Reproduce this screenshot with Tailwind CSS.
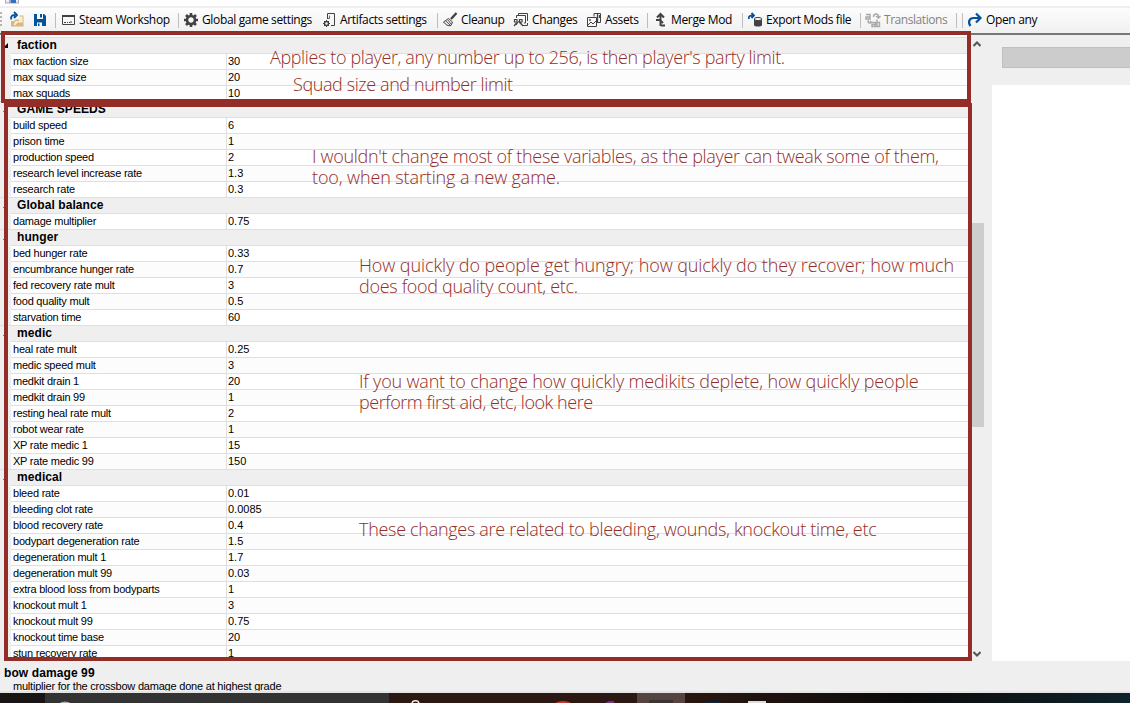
<!DOCTYPE html>
<html lang="en">
<head>
<meta charset="utf-8">
<title>Global game settings</title>
<script src="https://cdn.jsdelivr.net/npm/@tailwindcss/browser@4"></script>
</head>
<body class="relative flex h-[703px] w-[1130px] flex-col overflow-hidden bg-[#efefef] text-black">
<header class="h-[6px] shrink-0 bg-white">
  <svg class="ml-[5px] block" width="14" height="4"><path d="M0 0h14v3.500H0z" fill="#a3a9b5"/><path d="M1 0h3v2.500H1zM11 0h2v2.500h-2z" fill="#eef"/><path d="M6 0h5v3H6z" fill="#2f6fd0"/></svg>
</header>
<nav class="flex h-[29px] shrink-0 items-start border-t-2 border-b-2 border-t-[#efefef] border-b-[#777] bg-linear-to-b from-[#fdfdfd] to-[#f0f0f0] font-['Open_Sans',sans-serif] text-[12px] leading-[24px] tracking-[-0.35px] whitespace-nowrap">
  <svg class="shrink-0" width="79" height="25" viewBox="0 8 79 25">
    <path d="M0 12h2v2H0zM0 16h2v2H0zM0 20h2v2H0zM0 24h2v2H0z" fill="#b4b4b4"/>
    <path d="M55.500 13v15" stroke="#bdbdbd"/>
    <path d="M11 21v5.500h12.500V15.500H19.500v4h-4l-1.500 1.500z" fill="#dcb67a"/><path d="M19 16.500h3.500v6h-5l-2 2.500h-2l2-4h3.500z" fill="#f5eddd"/>
    <path d="M11.500 19.500c-1.500-3 .5-4.500 4-4.500M14 12l3 3-3 3" fill="none" stroke="#00539c" stroke-width="1.800"/>
    <path d="M34 14h10l2 2v10H34z" fill="#00539c"/><path d="M37 14h6v5h-6zM37 22.500h5v3.500h-5z" fill="#f9f9f9"/><path d="M40 14h2v3.500h-2zM38 23.500h1.500v2.500H38z" fill="#00539c"/>
    <g fill="none" stroke="#424242"><path d="M62.500 15.500h12v9h-12z"/><path d="M62 16h13" stroke-width="2"/><path d="M64 22.500h2M67 22.500h1M69 22.500h1M71 21v2"/></g>
  </svg>
  <span class="w-[97px]">Steam Workshop</span>
  <svg class="shrink-0" width="26" height="25" viewBox="176 8 26 25">
    <path d="M178.500 13v15" stroke="#bdbdbd"/>
    <g transform="translate(191 20)" stroke="#424242" stroke-width="2.600"><circle r="4" fill="none"/><path d="M0-7v3M0 7V4M-7 0h3M7 0H4M-5-5l2 2M5 5L3 3M-5 5l2-2M5-5L3-3"/></g>
  </svg>
  <span class="w-[116px]">Global game settings</span>
  <svg class="shrink-0" width="22" height="25" viewBox="318 8 22 25">
    <g fill="none" stroke="#424242"><path d="M327.500 19v-5.500h7v12H331"/><path d="M327 18.500h2.500v-3" stroke-width=".8"/><circle cx="326.500" cy="23.500" r="2" stroke-width="1.400"/><path d="M326.500 20v1.500M326.500 25.500V27M323 23.500h1.500M328.500 23.500h1.500M324 21l1 1M328 25l1 1M329 21l-1 1M325 25l-1 1"/></g>
  </svg>
  <span class="w-[95px]">Artifacts settings</span>
  <svg class="shrink-0" width="26" height="25" viewBox="435 8 26 25">
    <path d="M437.500 13v15" stroke="#bdbdbd"/>
    <path d="M456.500 13l-5.500 6" stroke="#424242" stroke-width="2.400"/><path d="M448.500 18.500l4 3.500-1.500 3.500c-3 .8-5-.5-7.500-3.500z" fill="#e4e4e4" stroke="#424242"/><path d="M446 21l4 4M448 20l3 4" stroke="#424242" stroke-width=".8"/>
  </svg>
  <span class="w-[49px]">Cleanup</span>
  <svg class="shrink-0" width="22" height="25" viewBox="510 8 22 25">
    <g fill="none" stroke="#424242"><path d="M518.500 16v-2.500h9v7.500M516.500 18v-2.500h9v7.500H524M527.500 23v2.500H522"/><path d="M514.500 19.500h2.500v2.500h-2.500zM519.500 19.500h2.500v2.500h-2.500zM514 26l2.500-3M523 26l-2.500-3M518 22l-2 3M518.500 21l2.500 3" stroke-width="1.200"/></g>
  </svg>
  <span class="w-[50px]">Changes</span>
  <svg class="shrink-0" width="23" height="25" viewBox="582 8 23 25">
    <g fill="none" stroke="#424242"><path d="M587.500 17.500h9v9h-9zM588 25l3-3 2 2 3-3M594 16.500v-3h6.500v9H598"/><path d="M597.500 14v9M599.500 15v3" stroke-width="1.300"/><circle cx="590" cy="20" r=".6"/></g>
  </svg>
  <span class="w-[40px]">Assets</span>
  <svg class="shrink-0" width="26" height="25" viewBox="645 8 26 25">
    <path d="M647.500 13v15" stroke="#bdbdbd"/>
    <path d="M660.500 26V14M657 17.500l3.500-3.500 3.500 3.500M656 20h4M661 25.500h4M660 20l3 3" fill="none" stroke="#424242" stroke-width="2"/>
  </svg>
  <span class="w-[69px]">Merge Mod</span>
  <svg class="shrink-0" width="26" height="25" viewBox="740 8 26 25">
    <path d="M742.500 13v15" stroke="#bdbdbd"/>
    <path d="M749 19c-1-3 1-3.500 4-3.500M751.500 13l2.500 2.500-2.500 2.500" fill="none" stroke="#00539c" stroke-width="1.800"/><path d="M754 19v6c0 2 8 2 8 0v-6z" fill="#424242"/><ellipse cx="758" cy="19" rx="3.700" ry="1.600" fill="#f4f4f4" stroke="#424242"/>
  </svg>
  <span class="w-[92px]">Export Mods file</span>
  <svg class="shrink-0" width="26" height="25" viewBox="858 8 26 25">
    <path d="M860.500 13v15" stroke="#bdbdbd"/>
    <g fill="none" stroke="#a8a8a8" stroke-width="1.400"><path d="M866 14.500h4v4.500h-4v-2h4M873.500 17c0-4 5-4 5 0M876 16l2.500 2 2-2M872 22.500h3.500v4H872v-2h3M877 19.500v7h2.500v-4H877M869 20.500c-2 1-1 3 2 2.500M870 21l2 2"/></g>
  </svg>
  <span class="w-[70px] tracking-[-0.45px] text-[#838383]">Translations</span>
  <svg class="shrink-0" width="32" height="25" viewBox="954 8 32 25">
    <path d="M956.500 13v15M962.500 13v15" stroke="#bdbdbd"/>
    <path d="M970.500 26c-3-4-1-8 3-8h6M976 13.500l4.500 4.500-4.500 4.500" fill="none" stroke="#00539c" stroke-width="2.200"/>
  </svg>
  <span>Open any</span>
</nav>

<main class="flex h-[626px] shrink-0">
  <section id="grid" class="h-[626px] w-[970px] shrink-0 overflow-hidden border-t-2 border-white font-['Liberation_Sans',Arial,sans-serif] text-[11px] leading-[15px] whitespace-nowrap"></section>
  <div class="flex w-[14px] shrink-0 flex-col">
    <svg class="mt-[5px] ml-[3px] shrink-0" width="8" height="8" fill="none" stroke="#555" stroke-width="2"><path d="M.500 6L4 2.500 7.500 6"/></svg>
    <div class="mt-[175px] h-[204px] shrink-0 bg-[#cdcdcd]"></div>
    <svg class="mt-auto mb-[3px] ml-[3px] shrink-0" width="8" height="8" fill="none" stroke="#555" stroke-width="2"><path d="M.500 2L4 5.500 7.500 2"/></svg>
  </div>
  <aside class="flex grow flex-col pl-2">
    <div class="mt-[12px] ml-[10px] h-[21px] border border-r-0 border-[#bfbfbf] bg-[#ccc]"></div>
    <div class="mt-[17px] grow bg-white"></div>
  </aside>
</main>

<footer class="h-[32px] shrink-0 overflow-hidden border-b-2 border-[#e4e4e4] pt-[5px] pl-[4px] font-['Liberation_Sans',Arial,sans-serif] text-[11px]">
  <h2 class="text-[12px] leading-[15px] font-bold tracking-[0.1px]">bow damage 99</h2>
  <p class="-mt-[2px] pl-[9px] leading-[14px] tracking-[-0.21px]">multiplier for the crossbow damage done at highest grade</p>
</footer>
<div class="flex h-[10px] shrink-0 items-end bg-[#0b0b0c]">
  <div class="h-full w-[45px] bg-[#191515]"></div>
  <div class="flex h-full w-[344px] items-end bg-[#333]"><svg class="ml-[14px]" width="12" height="2"><ellipse cx="6" cy="3" rx="5" ry="2.500" fill="#aaa"/></svg></div>
  <div class="flex h-full w-[248px] items-end bg-[#2b1812]">
    <svg width="248" height="3"><path d="M23 3c1-3 6-3 7 0" fill="none" stroke="#eee" stroke-width="1.600"/><ellipse cx="174" cy="4" rx="8" ry="3" fill="#c0392b"/><path d="M216 3l4-2h5v2z" fill="#7b2f82"/></svg>
  </div>
  <div class="flex h-full w-[48px] items-end bg-[#554440]"><div class="ml-[12px] h-[3px] w-[24px] bg-[#3b3534]"></div></div>
  <div class="flex h-full grow items-end bg-linear-to-r from-[#2a1610] via-[#0b0b0b] to-[#0d222a]"><div class="ml-[21px] h-px w-[14px] bg-[#0d2547]"></div><div class="ml-[28px] h-[2px] w-[18px] bg-[#ddd]"></div></div>
</div>

<!-- annotations drawn over the property grid -->
<div class="absolute top-[31px] left-[1px] h-[72px] w-[970px] border-4 border-[#922d28]"></div>
<div class="absolute top-[103px] left-[4px] h-[558px] w-[968px] border-4 border-[#922d28]"></div>
<div class="font-['Open_Sans',sans-serif] text-[18px] leading-[21px] font-light whitespace-nowrap text-[#922d28]">
  <p class="absolute top-[47px] left-[270px] tracking-[-0.38px]">Applies to player, any number up to 256, is then player's party limit.</p>
  <p class="absolute top-[74px] left-[293px] tracking-[-0.4px]">Squad size and number limit</p>
  <p class="absolute top-[146px] left-[312px] tracking-[-0.31px]">I wouldn't change most of these variables, as the player can tweak some of them,<br><span class="tracking-[-0.12px]">too, when starting a new game.</span></p>
  <p class="absolute top-[255px] left-[359px] tracking-[-0.09px]">How quickly do people get hungry; how quickly do they recover; how much<br><span class="tracking-[-0.31px]">does food quality count, etc.</span></p>
  <p class="absolute top-[371px] left-[359px] tracking-[-0.18px]">If you want to change how quickly medikits deplete, how quickly people<br><span class="tracking-[-0.45px]">perform first aid, etc, look here</span></p>
  <p class="absolute top-[519px] left-[359px] tracking-[-0.3px]">These changes are related to bleeding, wounds, knockout time, etc</p>
</div>

<script>
const groups = [
  ['faction', [['max faction size','30'],['max squad size','20'],['max squads','10']]],
  ['GAME SPEEDS', [['build speed','6'],['prison time','1'],['production speed','2'],['research level increase rate','1.3'],['research rate','0.3']]],
  ['Global balance', [['damage multiplier','0.75']]],
  ['hunger', [['bed hunger rate','0.33'],['encumbrance hunger rate','0.7'],['fed recovery rate mult','3'],['food quality mult','0.5'],['starvation time','60']]],
  ['medic', [['heal rate mult','0.25'],['medic speed mult','3'],['medkit drain 1','20'],['medkit drain 99','1'],['resting heal rate mult','2'],['robot wear rate','1'],['XP rate medic 1','15'],['XP rate medic 99','150']]],
  ['medical', [['bleed rate','0.01'],['bleeding clot rate','0.0085'],['blood recovery rate','0.4'],['bodypart degeneration rate','1.5'],['degeneration mult 1','1.7'],['degeneration mult 99','0.03'],['extra blood loss from bodyparts','1'],['knockout mult 1','3'],['knockout mult 99','0.75'],['knockout time base','20'],['stun recovery rate','1']]]
];
document.getElementById('grid').innerHTML = groups.map(([title, rows]) => `
  <div class="flex h-[16px] items-center border-t border-[#dfdfdf] bg-[#efefef]">
    <svg class="ml-[3px] shrink-0" width="5" height="5"><path d="M5 0v5H0z"/></svg>
    <h3 class="ml-[9px] text-[12px] font-bold tracking-[0.08px]">${title}</h3>
  </div>` + rows.map(([name, value], i) => `
  <div class="flex h-[16px] pl-[11px]">
    <div class="flex grow border-t border-[#dfdfdf] ${i % 2 ? 'bg-[#fcfcfc]' : 'bg-white'}">
      <span class="w-[216px] border-r border-[#dfdfdf] pl-[2px] tracking-[-0.22px]">${name}</span><span class="pl-px">${value}</span>
    </div>
  </div>`).join('')).join('');
</script>
</body>
</html>
